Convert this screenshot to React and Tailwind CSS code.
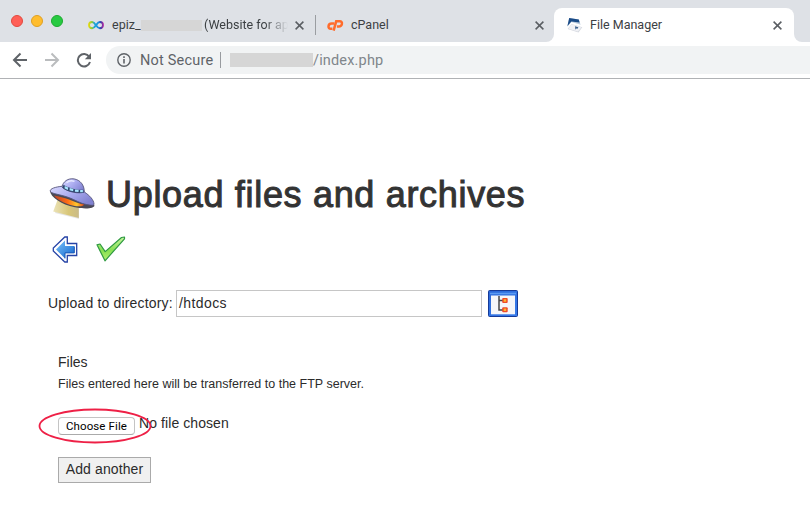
function CloseIcon() {
  return (
    <svg className="block h-[9px] w-[9px] shrink-0" viewBox="0 0 9 9" fill="none" stroke="#5a5e63" strokeWidth="1.500">
      <path d="M.6.6l7.800 7.800M8.400.6L.6 8.400" />
    </svg>
  );
}

function InfinityIcon() {
  return (
    <svg className="block h-4 w-4 shrink-0" viewBox="0 0 16 16" fill="none">
      <defs>
        <linearGradient id="rainbow" x1="0" x2="16" y1="0" y2="0" gradientUnits="userSpaceOnUse">
          <stop offset="0" stopColor="#f3dc10" />
          <stop offset=".25" stopColor="#8ccb35" />
          <stop offset=".4" stopColor="#1ba6d8" />
          <stop offset=".65" stopColor="#1b90df" />
          <stop offset=".8" stopColor="#3b3aa8" />
          <stop offset="1" stopColor="#c92ba0" />
        </linearGradient>
      </defs>
      <path
        d="M8 8.200C6.600 6 5.600 5 4.100 5 2.300 5 1 6.300 1 8s1.300 3.200 3.100 3.200C6 11.200 6.700 10 8 8.200S10.200 5 11.900 5C13.700 5 15 6.300 15 8s-1.300 3.200-3.100 3.200C10.400 11.200 9.400 10.400 8 8.200z"
        stroke="url(#rainbow)"
        strokeWidth="1.900"
      />
    </svg>
  );
}

function CPanelIcon() {
  return (
    <svg className="block h-4 w-[17px] shrink-0" viewBox="0 0 17 16" fill="none" stroke="#ff6c2c" strokeWidth="2.500">
      <path d="M7.400 6.400H4.700C2.900 6.400 1.600 7.700 1.500 9.300c-.1 1.500.8 2.500 2.200 2.500h1.700" />
      <path d="M6.600 13.700L9.200 4.300h3.500c1.700 0 2.500 1.200 2.200 2.600-.3 1.500-1.500 2.500-3.100 2.500H9.900" />
    </svg>
  );
}

function FileManagerIcon() {
  return (
    <svg className="block h-4 w-4 shrink-0" viewBox="0 0 16 16">
      <path d="M4.500 7L15.300 10.200l-3.800 5.300L.6 12z" fill="#d6d9e0" />
      <path d="M4.500 7.300l9.800 3.200-3.400 4.100L1.500 11.800z" fill="#f0f1f5" />
      <path d="M2.200 1l9.600 1.400 1.800 5.400-2.200-.9-7-2L.4 9.800z" fill="#b9cadd" />
      <path d="M2.200 1l9.600 1.400.8 3L4.400 4.400.4 8.900z" fill="#1a4b87" />
      <path d="M8 9.300l3.400 1-.9 1.400-1.300-.2-.8 1.200z" fill="#3d638f" />
    </svg>
  );
}

function UfoIcon() {
  return (
    <svg className="block h-[42px] w-[48px] shrink-0" viewBox="0 0 48 42">
      <defs>
        <linearGradient id="hull" x1="0" y1="0" x2="1" y2=".6">
          <stop offset="0" stopColor="#dadaff" />
          <stop offset=".5" stopColor="#aeaff2" />
          <stop offset="1" stopColor="#8283d2" />
        </linearGradient>
        <linearGradient id="beam" x1="0" x2="1">
          <stop offset="0" stopColor="#ebe3b8" />
          <stop offset=".6" stopColor="#d8c678" />
          <stop offset="1" stopColor="#cabb88" />
        </linearGradient>
        <linearGradient id="glow" x1="0" x2="1">
          <stop offset="0" stopColor="#b8432b" />
          <stop offset=".45" stopColor="#ff6d16" />
          <stop offset=".75" stopColor="#ffc92d" />
          <stop offset="1" stopColor="#d8331b" />
        </linearGradient>
      </defs>
      <path d="M10 24l20 6v10L6 34z" fill="#000" opacity=".1" transform="translate(1 1)" />
      <path d="M9.500 22l21.300 6.500V40L5.200 33.500z" fill="url(#beam)" />
      <path d="M2 13c.5 6 11 13.500 25 16.300 10 2 19 1.500 19.500-1.800l-5-5L8 11z" fill="#4b4955" />
      <path d="M6 17.500c5 1 10 2 15 4s10 4.500 15.500 5c-2 2.500-8 2.300-14 .5S8.500 21.500 6 17.500z" fill="url(#glow)" />
      <path d="M14.500 8.200C7 9 2.200 10.600 2.200 13c.2 2.300 7.500 3.200 14.500 5.200 9 2.600 13.500 6.300 20 7.900 5 1.200 9.300 1.800 9.300.2 0-4.300-4.500-9-9.700-12.300z" fill="url(#hull)" stroke="#55537a" strokeWidth=".9" />
      <path d="M14 9C15 3.500 20 0 26 .9c6.200 1 10.300 6 10.300 13-4 2.300-17.800.2-22.300-4.900z" fill="url(#hull)" stroke="#55537a" strokeWidth=".9" />
      <path d="M15.500 6.800c4.500 3.300 13.500 5.500 20 4.900v3c-7 .9-17.500-1.500-21-5z" fill="#2f466f" />
      <path d="M16.800 7.900l3.400 1.600-.4 2.400-3.300-1.700zM21.800 10l3.600.9-.3 2.300-3.600-.9zM27 11.400l3.700.4-.2 2.300-3.600-.4zM32.200 12.100h2.700v2.200h-2.800z" fill="#a9e6ff" />
      <path d="M18.500 4.800c2-2 5-2.500 8-1.500" fill="none" stroke="#e8e9ff" strokeWidth="1.400" />
    </svg>
  );
}

function ArrowIcon() {
  return (
    <svg className="block h-[27px] w-[26px] shrink-0" viewBox="0 0 26 27">
      <defs>
        <linearGradient id="arrow" x1="0" x2="1" y1="0" y2="1">
          <stop offset="0" stopColor="#79c2fa" />
          <stop offset="1" stopColor="#1264cc" />
        </linearGradient>
      </defs>
      <path d="M15.300 1v6.500h9.400v12h-9.400V26h-2.500L1.300 15v-3L12.800 1z" fill="#fff" stroke="#2643a6" strokeWidth="1.300" />
      <path d="M13 4.600v5.500h9.300v6.800H13v5.500L4 13.500z" fill="url(#arrow)" />
      <path d="M13 22.400v-5.500h9.300v-6.300" fill="none" stroke="#1756b4" />
    </svg>
  );
}

function CheckIcon() {
  return (
    <svg className="block h-[26px] w-[30px] shrink-0" viewBox="0 0 30 26">
      <defs>
        <linearGradient id="check" x1="0" x2="0" y1="0" y2="1">
          <stop offset="0" stopColor="#c8f5a0" />
          <stop offset=".55" stopColor="#86e052" />
          <stop offset="1" stopColor="#b4f070" />
        </linearGradient>
      </defs>
      <path d="M1 8.800l3-.8 5.200 7.600L25.500 1.500l3-.5v1.800L9 24.800z" fill="url(#check)" stroke="#2f9a42" strokeWidth="1.200" strokeLinejoin="round" />
    </svg>
  );
}

function TreeIcon() {
  return (
    <svg className="block h-[27px] w-[30px] shrink-0" viewBox="0 0 30 27">
      <defs>
        <linearGradient id="frame" x1="0" x2="1" y1="0" y2="1">
          <stop offset="0" stopColor="#2a67d7" />
          <stop offset="1" stopColor="#377cec" />
        </linearGradient>
      </defs>
      <rect x=".5" y=".5" width="29" height="26" rx="1" fill="url(#frame)" stroke="#163a98" />
      <path d="M2 3.500h26" stroke="#5b9bf3" strokeWidth="1.500" />
      <path d="M3 5.500h24v18.800H3z" fill="#f5f6fa" />
      <path d="M11 6v14H15M11 10.500H15" fill="none" stroke="#454548" strokeWidth="1.500" />
      <rect x="14.200" y="8" width="5.500" height="5" rx="1" fill="#ee4a2a" />
      <rect x="14.200" y="17.300" width="5.500" height="5" rx="1" fill="#ee4a2a" />
      <path d="M15.700 9.300h2.500v2.400h-2.500zM15.700 18.600h2.500V21h-2.500z" fill="#ffb62a" />
    </svg>
  );
}

function TabStrip() {
  return (
    <div className="flex h-[42px] bg-[#dee1e6] font-['Roboto',sans-serif] text-[12.5px] text-[#3c4043]">
      <div className="flex w-[80px] gap-2 pt-[15px] pl-[11px]">
        <span className="size-3 rounded-full border border-[#e2493f] bg-[#ff5f57]" />
        <span className="size-3 rounded-full border border-[#dfa023] bg-[#ffbd2e]" />
        <span className="size-3 rounded-full border border-[#1daa30] bg-[#28ca42]" />
      </div>
      <div className="mt-2 flex h-[34px] w-[235px] items-center pl-2">
        <InfinityIcon />
        <span className="ml-2 w-[29px] whitespace-nowrap">epiz_</span>
        <span className="h-[11px] w-[61px] bg-[#d6d6d6]" />
        <span className="ml-[2px] w-[84px] overflow-hidden whitespace-nowrap [mask-image:linear-gradient(to_right,black_72%,transparent)]">
          (Website for ap
        </span>
        <span className="ml-[7px]">
          <CloseIcon />
        </span>
      </div>
      <div className="mt-[15px] h-5 w-px bg-[#9a9da1]" />
      <div className="mt-2 flex h-[34px] w-[230px] items-center pr-[2px] pl-[11px]">
        <CPanelIcon />
        <span className="ml-[7px] grow">cPanel</span>
        <CloseIcon />
      </div>
      <div className="flex h-[42px] w-2 items-end bg-white">
        <span className="h-[42px] w-full rounded-br-lg bg-[#dee1e6]" />
      </div>
      <div className="mt-2 flex h-[34px] w-[240px] items-center rounded-t-lg bg-white pr-3 pl-[13px]">
        <FileManagerIcon />
        <span className="ml-[7px] grow">File Manager</span>
        <CloseIcon />
      </div>
      <div className="h-[42px] grow bg-white">
        <div className="h-full rounded-bl-lg bg-[#dee1e6]" />
      </div>
    </div>
  );
}

function Toolbar() {
  return (
    <div className="flex h-[37px] items-start border-b border-[#b0b2b5] bg-white pt-1 font-['Roboto',sans-serif] text-[14.5px]">
      <div className="flex h-7 w-[106px] items-center pl-3">
        <svg className="h-4 w-4" viewBox="0 0 16 16" fill="none" stroke="#5f6368" strokeWidth="2">
          <path d="M15 8H2M8.500 1.500L2 8l6.500 6.500" />
        </svg>
        <svg className="ml-4 h-4 w-4" viewBox="0 0 16 16" fill="none" stroke="#babcbe" strokeWidth="2">
          <path d="M1 8h13M7.500 1.500L14 8l-6.500 6.500" />
        </svg>
        <svg className="ml-4 h-4 w-4" viewBox="0 0 16 16">
          <path d="M13.200 4.700A6.200 6.200 0 1 0 14 10" fill="none" stroke="#5f6368" strokeWidth="2" />
          <path d="M15 1v6.200H8.800z" fill="#5f6368" />
        </svg>
      </div>
      <div className="flex h-7 grow items-center rounded-l-full bg-[#f1f3f4] pl-[11px]">
        <svg className="h-[14px] w-[14px]" viewBox="0 0 14 14">
          <circle cx="7" cy="7" r="6.200" fill="none" stroke="#5f6368" strokeWidth="1.400" />
          <path d="M6.200 6h1.600v4.500H6.200zM6.200 3.300h1.600v1.600H6.200z" fill="#5f6368" />
        </svg>
        <span className="ml-[9px] w-[80px] pt-[2px] tracking-[0.2px] whitespace-nowrap text-[#5f6368]">Not Secure</span>
        <span className="h-4 w-px bg-[#989b9f]" />
        <span className="ml-[9px] h-[14px] w-[83px] bg-[#d6d6d6]" />
        <span className="pt-[2px] tracking-[0.17px] text-[#80868b]">/index.php</span>
      </div>
    </div>
  );
}

export default function App() {
  return (
    <div className="h-[522px] w-[810px] overflow-hidden bg-white">
      <TabStrip />
      <Toolbar />
      <main className="pt-[91px] pl-12 font-['Liberation_Sans',Arial,sans-serif] text-[14px] text-[#2b2b2b]">
        <div className="flex h-[50px] items-center">
          <span className="pt-[8px]">
            <UfoIcon />
          </span>
          <h1 className="ml-[10px] text-[36px] leading-[50px] tracking-[0.68px] whitespace-nowrap text-[#333] [-webkit-text-stroke:1px_#333]">
            Upload files and archives
          </h1>
        </div>
        <div className="mt-[15px] flex h-[28px] items-center gap-[18px] pl-1">
          <ArrowIcon />
          <CheckIcon />
        </div>
        <div className="mt-[27px] flex h-[27px] items-center">
          <span className="w-[128px] tracking-[0.17px] whitespace-nowrap">Upload to directory:</span>
          <div className="flex h-[27px] w-[306px] items-center border border-[#c6c6c6] pl-[2px] tracking-[0.4px]">/htdocs</div>
          <span className="ml-[6px]">
            <TreeIcon />
          </span>
        </div>
        <div className="mt-[35px] pl-[10px]">
          <p className="h-5 leading-5">Files</p>
          <p className="mt-[2px] h-5 text-[12.5px] leading-5 tracking-[0.01px]">Files entered here will be transferred to the FTP server.</p>
          <div className="relative mt-[19px] flex h-[24px] items-start">
            <span className="mt-[4px] flex h-[18px] w-[77px] items-center justify-center rounded border border-[#c4c4c4] border-b-[#aaa] bg-white pt-[2px] font-['Roboto',sans-serif] text-[11.5px] tracking-[0.1px] text-black">
              Choose File
            </span>
            <span className="ml-1 leading-5 tracking-[0.08px]">No file chosen</span>
            <svg className="absolute -top-[5px] -left-[20px] h-[36px] w-[114px]" viewBox="0 0 114 36" fill="none" stroke="#ee2046" strokeWidth="1.800">
              <ellipse cx="57" cy="18" rx="55.500" ry="16.500" />
            </svg>
          </div>
          <div className="mt-[20px] flex h-[26px] w-[93px] items-center justify-center border border-[#aaa] bg-[#f0f0f0] pb-[2px] tracking-[0.1px]">
            Add another
          </div>
        </div>
      </main>
    </div>
  );
}
